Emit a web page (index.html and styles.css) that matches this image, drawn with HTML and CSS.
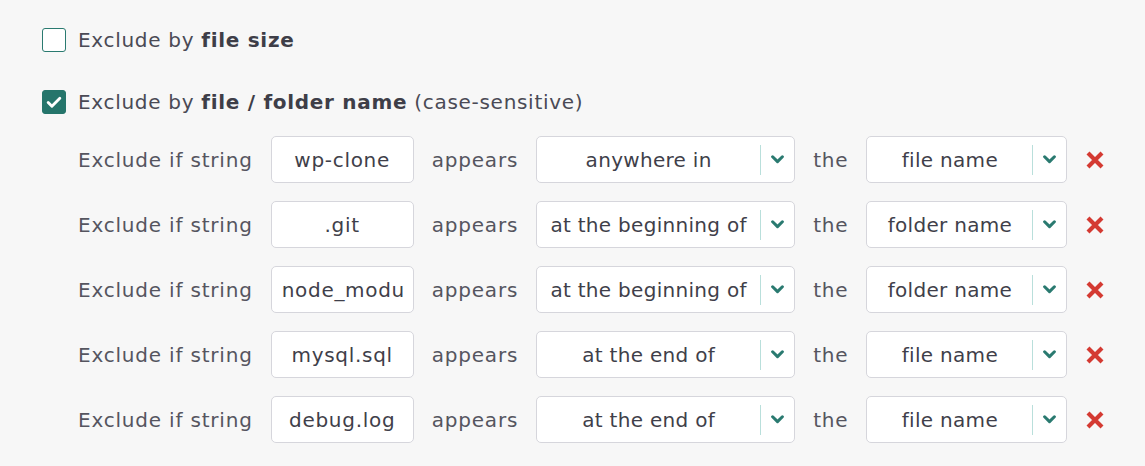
FILE: index.html
```html
<!DOCTYPE html>
<html lang="en">
<head>
    <meta charset="UTF-8">
    <title>Exclusions</title>
    <link rel="stylesheet" href="styles.css">
</head>
<body>
    <div class="exclusions">
        <label class="check-row">
            <span class="box"></span>
            <span>Exclude by <b>file size</b></span>
        </label>

        <label class="check-row">
            <span class="box checked">
                <svg viewBox="0 0 24 24" width="20" height="20"><path d="M5 12.5l4.5 4.5L19 7.5" fill="none" stroke="#fff" stroke-width="3.4" stroke-linecap="round" stroke-linejoin="round"/></svg>
            </span>
            <span>Exclude by <b>file / folder name</b> (case-sensitive)</span>
        </label>

        <div class="rules">
            <div class="rule">
                <span class="label">Exclude if string</span>
                <div class="field">wp-clone</div>
                <span class="label">appears</span>
                <div class="select wide"><span class="value">anywhere in</span><span class="arrow"><svg viewBox="0 0 12 8" width="13" height="9"><path d="M1.5 1.5L6 6l4.5-4.5" fill="none" stroke="#2a7a70" stroke-width="2.8" stroke-linecap="round" stroke-linejoin="round"/></svg></span></div>
                <span class="label">the</span>
                <div class="select narrow"><span class="value">file name</span><span class="arrow"><svg viewBox="0 0 12 8" width="13" height="9"><path d="M1.5 1.5L6 6l4.5-4.5" fill="none" stroke="#2a7a70" stroke-width="2.8" stroke-linecap="round" stroke-linejoin="round"/></svg></span></div>
                <svg class="remove" viewBox="0 0 20 20" width="20" height="20"><path d="M3 3l14 14M17 3L3 17" stroke="#d43a32" stroke-width="4.2"/></svg>
            </div>
            <div class="rule">
                <span class="label">Exclude if string</span>
                <div class="field">.git</div>
                <span class="label">appears</span>
                <div class="select wide"><span class="value">at the beginning of</span><span class="arrow"><svg viewBox="0 0 12 8" width="13" height="9"><path d="M1.5 1.5L6 6l4.5-4.5" fill="none" stroke="#2a7a70" stroke-width="2.8" stroke-linecap="round" stroke-linejoin="round"/></svg></span></div>
                <span class="label">the</span>
                <div class="select narrow"><span class="value">folder name</span><span class="arrow"><svg viewBox="0 0 12 8" width="13" height="9"><path d="M1.5 1.5L6 6l4.5-4.5" fill="none" stroke="#2a7a70" stroke-width="2.8" stroke-linecap="round" stroke-linejoin="round"/></svg></span></div>
                <svg class="remove" viewBox="0 0 20 20" width="20" height="20"><path d="M3 3l14 14M17 3L3 17" stroke="#d43a32" stroke-width="4.2"/></svg>
            </div>
            <div class="rule">
                <span class="label">Exclude if string</span>
                <div class="field left">node_modu</div>
                <span class="label">appears</span>
                <div class="select wide"><span class="value">at the beginning of</span><span class="arrow"><svg viewBox="0 0 12 8" width="13" height="9"><path d="M1.5 1.5L6 6l4.5-4.5" fill="none" stroke="#2a7a70" stroke-width="2.8" stroke-linecap="round" stroke-linejoin="round"/></svg></span></div>
                <span class="label">the</span>
                <div class="select narrow"><span class="value">folder name</span><span class="arrow"><svg viewBox="0 0 12 8" width="13" height="9"><path d="M1.5 1.5L6 6l4.5-4.5" fill="none" stroke="#2a7a70" stroke-width="2.8" stroke-linecap="round" stroke-linejoin="round"/></svg></span></div>
                <svg class="remove" viewBox="0 0 20 20" width="20" height="20"><path d="M3 3l14 14M17 3L3 17" stroke="#d43a32" stroke-width="4.2"/></svg>
            </div>
            <div class="rule">
                <span class="label">Exclude if string</span>
                <div class="field">mysql.sql</div>
                <span class="label">appears</span>
                <div class="select wide"><span class="value">at the end of</span><span class="arrow"><svg viewBox="0 0 12 8" width="13" height="9"><path d="M1.5 1.5L6 6l4.5-4.5" fill="none" stroke="#2a7a70" stroke-width="2.8" stroke-linecap="round" stroke-linejoin="round"/></svg></span></div>
                <span class="label">the</span>
                <div class="select narrow"><span class="value">file name</span><span class="arrow"><svg viewBox="0 0 12 8" width="13" height="9"><path d="M1.5 1.5L6 6l4.5-4.5" fill="none" stroke="#2a7a70" stroke-width="2.8" stroke-linecap="round" stroke-linejoin="round"/></svg></span></div>
                <svg class="remove" viewBox="0 0 20 20" width="20" height="20"><path d="M3 3l14 14M17 3L3 17" stroke="#d43a32" stroke-width="4.2"/></svg>
            </div>
            <div class="rule">
                <span class="label">Exclude if string</span>
                <div class="field">debug.log</div>
                <span class="label">appears</span>
                <div class="select wide"><span class="value">at the end of</span><span class="arrow"><svg viewBox="0 0 12 8" width="13" height="9"><path d="M1.5 1.5L6 6l4.5-4.5" fill="none" stroke="#2a7a70" stroke-width="2.8" stroke-linecap="round" stroke-linejoin="round"/></svg></span></div>
                <span class="label">the</span>
                <div class="select narrow"><span class="value">file name</span><span class="arrow"><svg viewBox="0 0 12 8" width="13" height="9"><path d="M1.5 1.5L6 6l4.5-4.5" fill="none" stroke="#2a7a70" stroke-width="2.8" stroke-linecap="round" stroke-linejoin="round"/></svg></span></div>
                <svg class="remove" viewBox="0 0 20 20" width="20" height="20"><path d="M3 3l14 14M17 3L3 17" stroke="#d43a32" stroke-width="4.2"/></svg>
            </div>
        </div>
    </div>
</body>
</html>
```

FILE: styles.css
```css
body {
    margin: 0;
    background-color: #f7f7f7;
    font-family: 'DejaVu Sans', sans-serif;
    font-size: 20px;
    letter-spacing: 0.7px;
    color: #4a4a55;
}

.exclusions {
    padding: 28px 0 0 42px;
}

.check-row {
    display: flex;
    align-items: center;
    gap: 12px;
    height: 24px;
    margin-bottom: 38px;
    color: #4a4a55;
}

.check-row b {
    font-weight: bold;
    color: #3e3e48;
}

.box {
    width: 22px;
    height: 22px;
    border: 1px solid #2a7a70;
    border-radius: 3px;
    background-color: #fff;
    display: flex;
    align-items: center;
    justify-content: center;
}

.box.checked {
    background-color: #25756b;
    border-color: #25756b;
}

.rules {
    padding-left: 36px;
    margin-top: -16px;
    display: flex;
    flex-direction: column;
    gap: 18px;
}

.rule {
    display: flex;
    align-items: center;
    gap: 18px;
    height: 47px;
}

.label {
    color: #55555f;
    white-space: nowrap;
    letter-spacing: 0.8px;
}

.field {
    box-sizing: border-box;
    width: 143px;
    height: 47px;
    border: 1px solid #d6d6dc;
    border-radius: 5px;
    background-color: #fff;
    display: flex;
    align-items: center;
    justify-content: center;
    color: #3f3f4a;
    overflow: hidden;
    white-space: nowrap;
}

.field.left {
    justify-content: flex-start;
    padding-left: 10px;
}

.select {
    box-sizing: border-box;
    height: 47px;
    border: 1px solid #d6d6dc;
    border-radius: 5px;
    background-color: #fff;
    display: flex;
    align-items: center;
    color: #3f3f4a;
}

.select.wide {
    width: 259px;
}

.select.narrow {
    width: 201px;
}

.value {
    flex: 1;
    text-align: center;
    white-space: nowrap;
    letter-spacing: 0.3px;
}

.arrow {
    width: 33px;
    height: 30px;
    border-left: 1px solid #b9dfdb;
    display: flex;
    align-items: center;
    justify-content: center;
}

.remove {
    flex-shrink: 0;
}
```
